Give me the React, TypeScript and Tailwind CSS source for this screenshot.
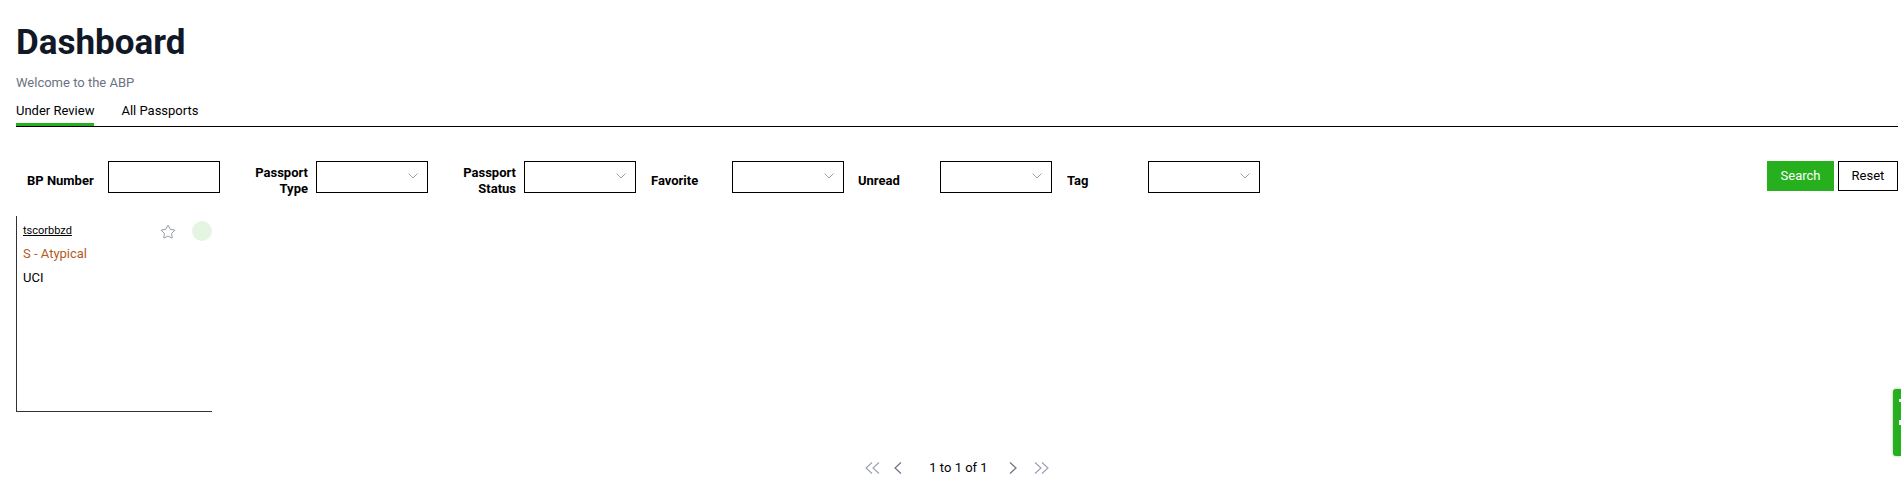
import { Star } from 'lucide-react';

type Filter = {
  label: string;
  kind: 'input' | 'select';
  align: string;
};

const FILTERS: Filter[] = [
  { label: 'BP Number', kind: 'input', align: 'text-left pl-[7px]' },
  { label: 'Passport Type', kind: 'select', align: 'text-right pr-2' },
  { label: 'Passport Status', kind: 'select', align: 'text-right pr-2' },
  { label: 'Favorite', kind: 'select', align: 'text-left pl-[7px]' },
  { label: 'Unread', kind: 'select', align: 'text-left pl-[6px]' },
  { label: 'Tag', kind: 'select', align: 'text-left pl-[7px]' },
];

function Chevron({ dir }: { dir: 'left' | 'right' }) {
  return (
    <svg width="8" height="12" viewBox="0 0 8 12" fill="none" className="text-gray-500">
      {dir === 'left' ? (
        <polyline points="7,0.5 1,6 7,11.5" stroke="currentColor" strokeWidth="1.2" />
      ) : (
        <polyline points="1,0.5 7,6 1,11.5" stroke="currentColor" strokeWidth="1.2" />
      )}
    </svg>
  );
}

function DoubleChevron({ dir }: { dir: 'left' | 'right' }) {
  return (
    <svg width="16" height="12" viewBox="0 0 16 12" fill="none" className="text-gray-400">
      {dir === 'left' ? (
        <>
          <polyline points="7,0.5 1,6 7,11.5" stroke="currentColor" strokeWidth="1.1" />
          <polyline points="14,0.5 8,6 14,11.5" stroke="currentColor" strokeWidth="1.1" />
        </>
      ) : (
        <>
          <polyline points="2,0.5 8,6 2,11.5" stroke="currentColor" strokeWidth="1.1" />
          <polyline points="9,0.5 15,6 9,11.5" stroke="currentColor" strokeWidth="1.1" />
        </>
      )}
    </svg>
  );
}

export default function App() {
  return (
    <div className="min-h-[484px] bg-white pl-4 pr-[3px] font-['Roboto',sans-serif] text-black">
      {/* header */}
      <h1 className="pt-[23px] text-[35px] font-bold leading-10 text-[#111827]">Dashboard</h1>
      <p className="mt-[12px] text-[13px] leading-4 text-gray-500">Welcome to the ABP</p>

      {/* tabs */}
      <div className="mt-[12px] flex gap-[27px] border-b border-black text-[13px] leading-4">
        <button className="border-b-[3px] border-[#26b01e] pb-[4px]">Under Review</button>
        <button className="border-b-[3px] border-transparent pb-[4px]">All Passports</button>
      </div>

      {/* filters */}
      <div className="mt-[34px] flex items-start justify-between pl-1">
        <div className="flex">
          {FILTERS.map((f) => (
            <div key={f.label} className="flex w-[208px] items-center">
              <label className={`w-[88px] text-[13px] font-bold leading-4 ${f.align}`}>{f.label}</label>
              <div className="mb-2 flex h-8 w-[112px] items-center justify-end border border-black bg-white pr-[9px]">
                {f.kind === 'select' && (
                  <svg width="10" height="6" viewBox="0 0 10 6" fill="none" className="mb-[3px] text-gray-400">
                    <polyline points="0.5,0.5 5,5 9.5,0.5" stroke="currentColor" strokeWidth="1" />
                  </svg>
                )}
              </div>
            </div>
          ))}
        </div>
        <div className="flex gap-1">
          <button className="h-[30px] w-[67px] bg-[#26b01e] text-[13px] text-white">Search</button>
          <button className="h-[30px] w-[60px] border border-black bg-white text-[13px]">Reset</button>
        </div>
      </div>

      {/* result card */}
      <div className="mt-[15px] h-[196px] w-[196px] overflow-hidden border-b border-l border-[#333]">
        <div className="flex h-4 items-start justify-between pl-[6px] mt-[7px]">
          <a className="text-[11px] leading-4 underline">tscorbbzd</a>
          <div className="flex items-start gap-[16px]">
            <Star size={16} strokeWidth={1.1} className="mt-[1px] text-gray-500" />
            <span className="-mt-[2px] h-5 w-5 rounded-full bg-[#e4f5e1]" />
          </div>
        </div>
        <p className="mt-[7px] pl-[6px] text-[13px] leading-4 text-[#b35c1e]">S - Atypical</p>
        <p className="mt-2 pl-[6px] text-[13px] leading-4">UCI</p>
      </div>

      {/* pagination */}
      <div className="mt-[48px] flex items-center justify-center text-[13px] leading-4">
        <DoubleChevron dir="left" />
        <span className="ml-[13px]"><Chevron dir="left" /></span>
        <span className="ml-[27px]">1 to 1 of 1</span>
        <span className="ml-[21px]"><Chevron dir="right" /></span>
        <span className="ml-[16px]"><DoubleChevron dir="right" /></span>
      </div>

      {/* floating feedback tab */}
      <div className="fixed right-0 top-[389px] flex h-[67px] w-2 flex-col items-end gap-[18px] overflow-hidden rounded-l-[3px] bg-[#26b01e] pt-[10px] shadow-[0_0_3px_rgba(0,0,0,0.3)]">
        <span className="h-[3px] w-[2px] bg-white" />
        <span className="h-[5px] w-[2px] bg-white" />
      </div>
    </div>
  );
}
